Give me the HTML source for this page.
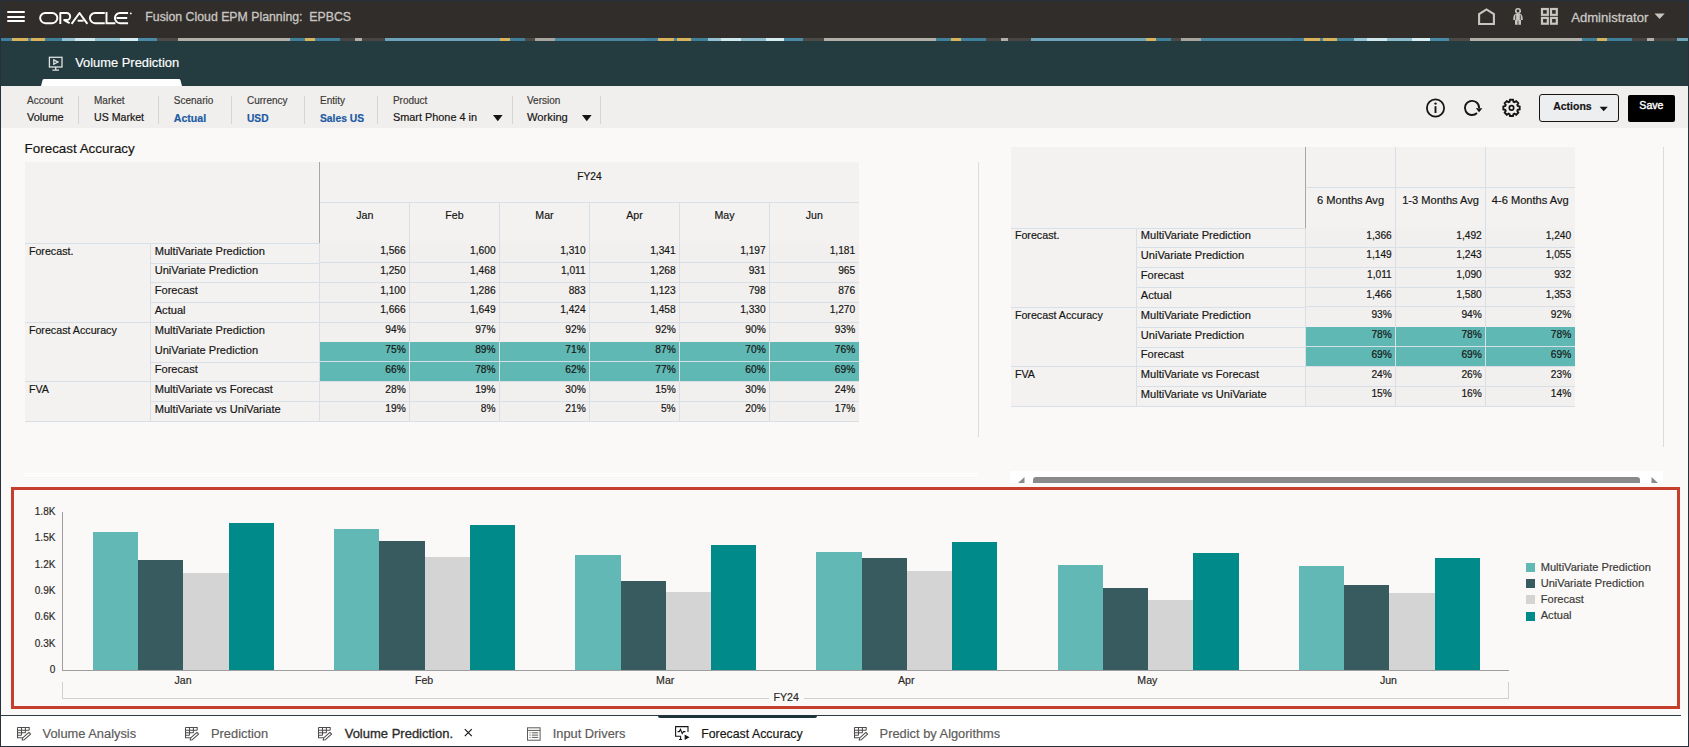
<!DOCTYPE html>
<html><head><meta charset="utf-8"><title>Forecast Accuracy</title>
<style>
html,body{margin:0;padding:0;width:1689px;height:747px;overflow:hidden;background:#faf9f7;}
body{position:relative;font-family:"Liberation Sans",sans-serif;}
.b{position:absolute;display:block;}
.t{position:absolute;white-space:nowrap;font-family:"Liberation Sans",sans-serif;-webkit-text-stroke-width:0.18px;}
</style></head><body>
<div class="b" style="left:0px;top:0px;width:1689px;height:38px;background:#312d2a;"></div>
<div class="b" style="left:0px;top:38px;width:1689px;height:3px;background:repeating-linear-gradient(90deg,#3f7f9d 0px,#3f7f9d 12px,#d8b35c 12px,#d8b35c 28px,#4a86a0 28px,#4a86a0 31px,#d8b35c 31px,#d8b35c 45px,#3f7f9a 45px,#3f7f9a 62px,#94c2d2 62px,#94c2d2 75px,#d0e9ef 75px,#d0e9ef 95px,#8cbccc 95px,#8cbccc 120px,#d6eef2 120px,#d6eef2 138px,#4a8aa6 138px,#4a8aa6 157px,#4b4a47 157px,#4b4a47 178px,#b2aea8 178px,#b2aea8 290px,#3f7f9a 290px,#3f7f9a 305px,#d8b35c 305px,#d8b35c 315px,#3f7f9a 315px,#3f7f9a 340px,#474644 340px,#474644 355px,#b2aea8 355px,#b2aea8 362px,#474644 362px,#474644 385px,#6ea4ba 385px,#6ea4ba 500px,#d8b35c 500px,#d8b35c 510px,#3f7f9a 510px,#3f7f9a 525px,#4b4a47 525px,#4b4a47 535px,#a8a49e 535px,#a8a49e 555px,#4a86a0 555px,#4a86a0 646px);"></div>
<div class="b" style="left:0px;top:41px;width:1689px;height:45px;background:#243b40;"></div>
<div class="b" style="left:0px;top:86px;width:1689px;height:42px;background:#f1efed;"></div>
<div class="b" style="left:0px;top:128px;width:1689px;height:587px;background:#faf9f7;"></div>
<div class="b" style="left:0px;top:715px;width:1689px;height:32px;background:#ffffff;"></div>
<div class="b" style="left:0px;top:715px;width:1681px;height:1px;background:#2a3c42;"></div>
<div class="b" style="left:7px;top:11px;width:18px;height:2px;background:#ffffff;border-radius:1px"></div>
<div class="b" style="left:7px;top:15.5px;width:18px;height:2px;background:#ffffff;border-radius:1px"></div>
<div class="b" style="left:7px;top:20px;width:18px;height:2px;background:#ffffff;border-radius:1px"></div>
<svg class="b" style="left:36px;top:8px;" width="100" height="20" viewBox="0 0 100 20"><g fill="none" stroke="#ffffff" stroke-width="1.95"><rect x="4.15" y="4.95" width="17.2" height="10.2" rx="5.1"/><path d="M24.3 16 V4.95 H30.6 A3.55 3.55 0 0 1 30.6 12.05 H28.2 L33.6 15.2" stroke-linejoin="round"/><path d="M35.6 15.9 L43.5 5 L51.4 15.9" stroke-linejoin="round"/><path d="M41.6 12.7 H47.6"/><path d="M68.8 4.95 H59 A5.1 5.1 0 0 0 59 15.15 H68.8"/><path d="M70.5 4.1 V15.15 H79.4"/><path d="M92.1 4.95 H84 A5.1 5.1 0 0 0 84 15.15 H92.1 M80.5 10.05 H91.2"/></g><circle cx="94.8" cy="5.4" r="0.9" fill="#ffffff"/></svg>
<div class="t" style="left:145.30px;top:10.34px;font-size:12.3px;line-height:15.99px;color:#c9c6c2;font-weight:400;-webkit-text-stroke:0.3px #c9c6c2;">Fusion Cloud EPM Planning:&nbsp; EPBCS</div>
<svg class="b" style="left:1474px;top:4px;" width="26" height="24" viewBox="0 0 26 24"><path d="M5.1 20 V10 L12.5 5.4 L19.9 10 V20 Z" fill="none" stroke="#c9c6c2" stroke-width="2.1" stroke-linejoin="miter"/></svg>
<svg class="b" style="left:1508px;top:4px;" width="20" height="24" viewBox="0 0 20 24"><circle cx="10" cy="7" r="2.2" fill="none" stroke="#c9c6c2" stroke-width="1.6"/><path d="M5.2 16 Q5.2 10.1 8 10.1 H12 Q14.8 10.1 14.8 16 H13 V20.8 H7 V16 Z" fill="#c9c6c2"/><path d="M7.7 11.2 V16 M12.3 11.2 V16 M10 16.6 V20.8" stroke="#312d2a" stroke-width="0.8"/></svg>
<svg class="b" style="left:1540px;top:7px;" width="20" height="20" viewBox="0 0 20 20"><g fill="none" stroke="#c9c6c2" stroke-width="2.2"><rect x="2" y="2" width="5.8" height="5.8"/><rect x="11" y="2" width="5.8" height="5.8"/><rect x="2" y="10.9" width="5.8" height="5.8"/><rect x="11" y="10.9" width="5.8" height="5.8"/></g></svg>
<div class="t" style="left:1571.20px;top:8.95px;font-size:13.1px;line-height:17.03px;color:#cbc8c4;font-weight:400;-webkit-text-stroke:0.3px #cbc8c4;">Administrator</div>
<svg class="b" style="left:1652px;top:12px;" width="14" height="9" viewBox="0 0 14 9"><path d="M2.5 1.6 H12.7 L7.6 7 Z" fill="#c9c6c2"/></svg>
<svg class="b" style="left:44px;top:52px;" width="24" height="22" viewBox="0 0 24 22"><g fill="none" stroke="#e0e0de" stroke-width="1.3"><rect x="5.4" y="5.3" width="12.6" height="9.7"/><path d="M9.8 7.9 L14 10.1 L9.8 12.3 Z"/><path d="M11.7 15 V18 M8.4 18.2 H15"/></g></svg>
<div class="t" style="left:75.20px;top:55.05px;font-size:12.9px;line-height:16.77px;color:#ffffff;font-weight:400;">Volume Prediction</div>
<svg class="b" style="left:40px;top:78px;" width="143" height="8" viewBox="0 0 143 8"><path d="M1 8 L2.6 2 Q3 1 4.2 1 H138.8 Q140 1 140.4 2 L142 8 Z" fill="#ffffff"/></svg>
<div class="t" style="left:27.00px;top:94.03px;font-size:10px;line-height:13.0px;color:#3c3a38;font-weight:400;">Account</div>
<div class="t" style="left:27.00px;top:110.04px;font-size:11px;line-height:14.3px;color:#161513;font-weight:400;">Volume</div>
<div class="t" style="left:94.00px;top:94.03px;font-size:10px;line-height:13.0px;color:#3c3a38;font-weight:400;">Market</div>
<div class="t" style="left:94.00px;top:110.94px;font-size:10.6px;line-height:13.78px;color:#161513;font-weight:400;">US Market</div>
<div class="t" style="left:173.80px;top:94.03px;font-size:10px;line-height:13.0px;color:#3c3a38;font-weight:400;">Scenario</div>
<div class="t" style="left:173.80px;top:111.84px;font-size:10.6px;line-height:13.78px;color:#1b5aa5;font-weight:700;">Actual</div>
<div class="t" style="left:247.00px;top:94.03px;font-size:10px;line-height:13.0px;color:#3c3a38;font-weight:400;">Currency</div>
<div class="t" style="left:247.00px;top:112.24px;font-size:10.2px;line-height:13.26px;color:#1b5aa5;font-weight:700;">USD</div>
<div class="t" style="left:320.00px;top:94.03px;font-size:10px;line-height:13.0px;color:#3c3a38;font-weight:400;">Entity</div>
<div class="t" style="left:320.00px;top:112.14px;font-size:10.3px;line-height:13.39px;color:#1b5aa5;font-weight:700;">Sales US</div>
<div class="t" style="left:392.90px;top:94.03px;font-size:10px;line-height:13.0px;color:#3c3a38;font-weight:400;">Product</div>
<div class="t" style="left:392.90px;top:110.14px;font-size:10.9px;line-height:14.17px;color:#161513;font-weight:400;">Smart Phone 4 in</div>
<svg class="b" style="left:491.8px;top:113px;" width="12" height="10" viewBox="0 0 12 10"><path d="M1 2 H10.6 L5.8 8.2 Z" fill="#161513"/></svg>
<div class="t" style="left:527.00px;top:94.03px;font-size:10px;line-height:13.0px;color:#3c3a38;font-weight:400;">Version</div>
<div class="t" style="left:527.00px;top:109.84px;font-size:11.2px;line-height:14.56px;color:#161513;font-weight:400;">Working</div>
<svg class="b" style="left:580.5px;top:113px;" width="12" height="10" viewBox="0 0 12 10"><path d="M1 2 H10.6 L5.8 8.2 Z" fill="#161513"/></svg>
<div class="b" style="left:78px;top:95.5px;width:1px;height:28.5px;background:#d7d5d2;"></div>
<div class="b" style="left:158px;top:95.5px;width:1px;height:28.5px;background:#d7d5d2;"></div>
<div class="b" style="left:231px;top:95.5px;width:1px;height:28.5px;background:#d7d5d2;"></div>
<div class="b" style="left:304px;top:95.5px;width:1px;height:28.5px;background:#d7d5d2;"></div>
<div class="b" style="left:377px;top:95.5px;width:1px;height:28.5px;background:#d7d5d2;"></div>
<div class="b" style="left:512px;top:95.5px;width:1px;height:28.5px;background:#d7d5d2;"></div>
<div class="b" style="left:600px;top:95.5px;width:1px;height:28.5px;background:#d7d5d2;"></div>
<svg class="b" style="left:1424px;top:97px;" width="24" height="22" viewBox="0 0 24 22"><circle cx="11.5" cy="11" r="8.6" fill="none" stroke="#161513" stroke-width="1.8"/><circle cx="11.5" cy="6.6" r="1.2" fill="#161513"/><path d="M11.5 9.2 V16" stroke="#161513" stroke-width="1.9"/></svg>
<svg class="b" style="left:1461px;top:97px;" width="24" height="22" viewBox="0 0 24 22"><path d="M18.1 11 A7.1 7.1 0 1 0 16 16" fill="none" stroke="#161513" stroke-width="1.9"/><path d="M14.8 11.2 L21.4 11.2 L18.1 15.3 Z" fill="#161513"/></svg>
<svg class="b" style="left:1500px;top:97px;" width="24" height="22" viewBox="0 0 24 22"><polygon points="19.67,9.41 19.67,12.39 17.69,12.88 17.28,13.88 18.32,15.62 16.22,17.72 14.48,16.68 13.48,17.09 12.99,19.07 10.01,19.07 9.52,17.09 8.52,16.68 6.78,17.72 4.68,15.62 5.72,13.88 5.31,12.88 3.33,12.39 3.33,9.41 5.31,8.92 5.72,7.92 4.68,6.18 6.78,4.08 8.52,5.12 9.52,4.71 10.01,2.73 12.99,2.73 13.48,4.71 14.48,5.12 16.22,4.08 18.32,6.18 17.28,7.92 17.69,8.92" fill="none" stroke="#161513" stroke-width="1.9" stroke-linejoin="miter"/><circle cx="11.5" cy="10.9" r="2.2" fill="none" stroke="#161513" stroke-width="1.7"/></svg>
<div class="b" style="left:1539px;top:94.2px;width:80px;height:27.8px;background:#eceeef;border:1.3px solid #161513;border-radius:3px;box-sizing:border-box"></div>
<div class="t" style="left:1553.20px;top:100.44px;font-size:10.5px;line-height:13.65px;color:#161513;font-weight:700;">Actions</div>
<svg class="b" style="left:1598px;top:105px;" width="12" height="8" viewBox="0 0 12 8"><path d="M1.6 1.8 H9.8 L5.7 6.3 Z" fill="#161513"/></svg>
<div class="b" style="left:1627.8px;top:94.8px;width:47.2px;height:27.2px;background:#000000;border-radius:2px"></div>
<div class="t" style="left:1621.40px;width:60px;text-align:center;top:99.04px;font-size:10.6px;line-height:13.78px;color:#ffffff;font-weight:400;-webkit-text-stroke:0.4px #ffffff;">Save</div>
<div class="b" style="left:25px;top:162px;width:834px;height:81.30000000000001px;background:#f3f2f1;"></div>
<div class="b" style="left:25px;top:243.3px;width:294.6px;height:178.2px;background:#f3f2f1;"></div>
<div class="b" style="left:319.6px;top:243.3px;width:539.4px;height:178.2px;background:#f1f0ee;"></div>
<div class="b" style="left:320px;top:202px;width:539px;height:1px;background:#d8dfe6;"></div>
<div class="b" style="left:409.0px;top:202.5px;width:1px;height:41px;background:#d8dfe6;"></div>
<div class="b" style="left:498.9px;top:202.5px;width:1px;height:41px;background:#d8dfe6;"></div>
<div class="b" style="left:589.0px;top:202.5px;width:1px;height:41px;background:#d8dfe6;"></div>
<div class="b" style="left:679.0px;top:202.5px;width:1px;height:41px;background:#d8dfe6;"></div>
<div class="b" style="left:769.0px;top:202.5px;width:1px;height:41px;background:#d8dfe6;"></div>
<div class="t" style="left:549.50px;width:80px;text-align:center;top:169.74px;font-size:10.2px;line-height:13.26px;color:#161513;font-weight:400;">FY24</div>
<div class="t" style="left:324.75px;width:80px;text-align:center;top:209.04px;font-size:10.6px;line-height:13.78px;color:#161513;font-weight:400;">Jan</div>
<div class="t" style="left:414.45px;width:80px;text-align:center;top:209.04px;font-size:10.6px;line-height:13.78px;color:#161513;font-weight:400;">Feb</div>
<div class="t" style="left:504.45px;width:80px;text-align:center;top:209.04px;font-size:10.6px;line-height:13.78px;color:#161513;font-weight:400;">Mar</div>
<div class="t" style="left:594.50px;width:80px;text-align:center;top:209.04px;font-size:10.6px;line-height:13.78px;color:#161513;font-weight:400;">Apr</div>
<div class="t" style="left:684.50px;width:80px;text-align:center;top:209.04px;font-size:10.6px;line-height:13.78px;color:#161513;font-weight:400;">May</div>
<div class="t" style="left:774.25px;width:80px;text-align:center;top:209.04px;font-size:10.6px;line-height:13.78px;color:#161513;font-weight:400;">Jun</div>
<div class="b" style="left:319.1px;top:162px;width:1px;height:81.30000000000001px;background:#a9a7a4;"></div>
<div class="b" style="left:320px;top:342px;width:89px;height:19px;background:#5fb8b3;"></div>
<div class="b" style="left:410px;top:342px;width:89px;height:19px;background:#5fb8b3;"></div>
<div class="b" style="left:500px;top:342px;width:89px;height:19px;background:#5fb8b3;"></div>
<div class="b" style="left:590px;top:342px;width:89px;height:19px;background:#5fb8b3;"></div>
<div class="b" style="left:680px;top:342px;width:89px;height:19px;background:#5fb8b3;"></div>
<div class="b" style="left:770px;top:342px;width:89px;height:19px;background:#5fb8b3;"></div>
<div class="b" style="left:320px;top:362px;width:89px;height:19px;background:#5fb8b3;"></div>
<div class="b" style="left:410px;top:362px;width:89px;height:19px;background:#5fb8b3;"></div>
<div class="b" style="left:500px;top:362px;width:89px;height:19px;background:#5fb8b3;"></div>
<div class="b" style="left:590px;top:362px;width:89px;height:19px;background:#5fb8b3;"></div>
<div class="b" style="left:680px;top:362px;width:89px;height:19px;background:#5fb8b3;"></div>
<div class="b" style="left:770px;top:362px;width:89px;height:19px;background:#5fb8b3;"></div>
<div class="b" style="left:25px;top:242.8px;width:294.6px;height:1px;background:#d8dfe6;"></div>
<div class="b" style="left:150.3px;top:262.6px;width:169.3px;height:1px;background:#d8dfe6;"></div>
<div class="b" style="left:319.6px;top:262.1px;width:539.4px;height:1px;background:#d8dfe6;"></div>
<div class="b" style="left:150.3px;top:282.40000000000003px;width:169.3px;height:1px;background:#d8dfe6;"></div>
<div class="b" style="left:319.6px;top:281.90000000000003px;width:539.4px;height:1px;background:#d8dfe6;"></div>
<div class="b" style="left:150.3px;top:302.20000000000005px;width:169.3px;height:1px;background:#d8dfe6;"></div>
<div class="b" style="left:319.6px;top:301.70000000000005px;width:539.4px;height:1px;background:#d8dfe6;"></div>
<div class="b" style="left:25px;top:322.0px;width:294.6px;height:1px;background:#d8dfe6;"></div>
<div class="b" style="left:319.6px;top:321.5px;width:539.4px;height:1px;background:#d8dfe6;"></div>
<div class="b" style="left:150.3px;top:361.6px;width:169.3px;height:1px;background:#d8dfe6;"></div>
<div class="b" style="left:319.6px;top:361.1px;width:539.4px;height:1px;background:#d8dfe6;"></div>
<div class="b" style="left:25px;top:381.4px;width:294.6px;height:1px;background:#d8dfe6;"></div>
<div class="b" style="left:319.6px;top:380.9px;width:539.4px;height:1px;background:#d8dfe6;"></div>
<div class="b" style="left:150.3px;top:401.20000000000005px;width:169.3px;height:1px;background:#d8dfe6;"></div>
<div class="b" style="left:319.6px;top:400.70000000000005px;width:539.4px;height:1px;background:#d8dfe6;"></div>
<div class="b" style="left:25px;top:421.0px;width:294.6px;height:1px;background:#d8dfe6;"></div>
<div class="b" style="left:319.6px;top:420.5px;width:539.4px;height:1px;background:#d8dfe6;"></div>
<div class="b" style="left:149.8px;top:243.3px;width:1px;height:178.2px;background:#d8dfe6;"></div>
<div class="b" style="left:319.1px;top:243.3px;width:1px;height:178.2px;background:#d8dfe6;"></div>
<div class="b" style="left:409.0px;top:243.3px;width:1px;height:178.2px;background:#d8dfe6;"></div>
<div class="b" style="left:498.9px;top:243.3px;width:1px;height:178.2px;background:#d8dfe6;"></div>
<div class="b" style="left:589.0px;top:243.3px;width:1px;height:178.2px;background:#d8dfe6;"></div>
<div class="b" style="left:679.0px;top:243.3px;width:1px;height:178.2px;background:#d8dfe6;"></div>
<div class="b" style="left:769.0px;top:243.3px;width:1px;height:178.2px;background:#d8dfe6;"></div>
<div class="t" style="left:28.90px;top:244.74px;font-size:10.7px;line-height:13.91px;color:#161513;font-weight:400;">Forecast.</div>
<div class="t" style="left:154.70px;top:243.64px;font-size:11.1px;line-height:14.43px;color:#161513;font-weight:400;">MultiVariate Prediction</div>
<div class="t" style="left:325.70px;width:80px;text-align:right;top:243.94px;font-size:10.2px;line-height:13.26px;color:#161513;font-weight:400;">1,566</div>
<div class="t" style="left:415.60px;width:80px;text-align:right;top:243.94px;font-size:10.2px;line-height:13.26px;color:#161513;font-weight:400;">1,600</div>
<div class="t" style="left:505.70px;width:80px;text-align:right;top:243.94px;font-size:10.2px;line-height:13.26px;color:#161513;font-weight:400;">1,310</div>
<div class="t" style="left:595.70px;width:80px;text-align:right;top:243.94px;font-size:10.2px;line-height:13.26px;color:#161513;font-weight:400;">1,341</div>
<div class="t" style="left:685.70px;width:80px;text-align:right;top:243.94px;font-size:10.2px;line-height:13.26px;color:#161513;font-weight:400;">1,197</div>
<div class="t" style="left:775.20px;width:80px;text-align:right;top:243.94px;font-size:10.2px;line-height:13.26px;color:#161513;font-weight:400;">1,181</div>
<div class="t" style="left:154.70px;top:263.44px;font-size:11.1px;line-height:14.43px;color:#161513;font-weight:400;">UniVariate Prediction</div>
<div class="t" style="left:325.70px;width:80px;text-align:right;top:263.74px;font-size:10.2px;line-height:13.26px;color:#161513;font-weight:400;">1,250</div>
<div class="t" style="left:415.60px;width:80px;text-align:right;top:263.74px;font-size:10.2px;line-height:13.26px;color:#161513;font-weight:400;">1,468</div>
<div class="t" style="left:505.70px;width:80px;text-align:right;top:263.74px;font-size:10.2px;line-height:13.26px;color:#161513;font-weight:400;">1,011</div>
<div class="t" style="left:595.70px;width:80px;text-align:right;top:263.74px;font-size:10.2px;line-height:13.26px;color:#161513;font-weight:400;">1,268</div>
<div class="t" style="left:685.70px;width:80px;text-align:right;top:263.74px;font-size:10.2px;line-height:13.26px;color:#161513;font-weight:400;">931</div>
<div class="t" style="left:775.20px;width:80px;text-align:right;top:263.74px;font-size:10.2px;line-height:13.26px;color:#161513;font-weight:400;">965</div>
<div class="t" style="left:154.70px;top:283.24px;font-size:11.1px;line-height:14.43px;color:#161513;font-weight:400;">Forecast</div>
<div class="t" style="left:325.70px;width:80px;text-align:right;top:283.54px;font-size:10.2px;line-height:13.26px;color:#161513;font-weight:400;">1,100</div>
<div class="t" style="left:415.60px;width:80px;text-align:right;top:283.54px;font-size:10.2px;line-height:13.26px;color:#161513;font-weight:400;">1,286</div>
<div class="t" style="left:505.70px;width:80px;text-align:right;top:283.54px;font-size:10.2px;line-height:13.26px;color:#161513;font-weight:400;">883</div>
<div class="t" style="left:595.70px;width:80px;text-align:right;top:283.54px;font-size:10.2px;line-height:13.26px;color:#161513;font-weight:400;">1,123</div>
<div class="t" style="left:685.70px;width:80px;text-align:right;top:283.54px;font-size:10.2px;line-height:13.26px;color:#161513;font-weight:400;">798</div>
<div class="t" style="left:775.20px;width:80px;text-align:right;top:283.54px;font-size:10.2px;line-height:13.26px;color:#161513;font-weight:400;">876</div>
<div class="t" style="left:154.70px;top:303.04px;font-size:11.1px;line-height:14.43px;color:#161513;font-weight:400;">Actual</div>
<div class="t" style="left:325.70px;width:80px;text-align:right;top:303.34px;font-size:10.2px;line-height:13.26px;color:#161513;font-weight:400;">1,666</div>
<div class="t" style="left:415.60px;width:80px;text-align:right;top:303.34px;font-size:10.2px;line-height:13.26px;color:#161513;font-weight:400;">1,649</div>
<div class="t" style="left:505.70px;width:80px;text-align:right;top:303.34px;font-size:10.2px;line-height:13.26px;color:#161513;font-weight:400;">1,424</div>
<div class="t" style="left:595.70px;width:80px;text-align:right;top:303.34px;font-size:10.2px;line-height:13.26px;color:#161513;font-weight:400;">1,458</div>
<div class="t" style="left:685.70px;width:80px;text-align:right;top:303.34px;font-size:10.2px;line-height:13.26px;color:#161513;font-weight:400;">1,330</div>
<div class="t" style="left:775.20px;width:80px;text-align:right;top:303.34px;font-size:10.2px;line-height:13.26px;color:#161513;font-weight:400;">1,270</div>
<div class="t" style="left:28.90px;top:323.94px;font-size:10.7px;line-height:13.91px;color:#161513;font-weight:400;">Forecast Accuracy</div>
<div class="t" style="left:154.70px;top:322.84px;font-size:11.1px;line-height:14.43px;color:#161513;font-weight:400;">MultiVariate Prediction</div>
<div class="t" style="left:325.70px;width:80px;text-align:right;top:323.14px;font-size:10.2px;line-height:13.26px;color:#161513;font-weight:400;">94%</div>
<div class="t" style="left:415.60px;width:80px;text-align:right;top:323.14px;font-size:10.2px;line-height:13.26px;color:#161513;font-weight:400;">97%</div>
<div class="t" style="left:505.70px;width:80px;text-align:right;top:323.14px;font-size:10.2px;line-height:13.26px;color:#161513;font-weight:400;">92%</div>
<div class="t" style="left:595.70px;width:80px;text-align:right;top:323.14px;font-size:10.2px;line-height:13.26px;color:#161513;font-weight:400;">92%</div>
<div class="t" style="left:685.70px;width:80px;text-align:right;top:323.14px;font-size:10.2px;line-height:13.26px;color:#161513;font-weight:400;">90%</div>
<div class="t" style="left:775.20px;width:80px;text-align:right;top:323.14px;font-size:10.2px;line-height:13.26px;color:#161513;font-weight:400;">93%</div>
<div class="t" style="left:154.70px;top:342.64px;font-size:11.1px;line-height:14.43px;color:#161513;font-weight:400;">UniVariate Prediction</div>
<div class="t" style="left:325.70px;width:80px;text-align:right;top:342.94px;font-size:10.2px;line-height:13.26px;color:#161513;font-weight:400;">75%</div>
<div class="t" style="left:415.60px;width:80px;text-align:right;top:342.94px;font-size:10.2px;line-height:13.26px;color:#161513;font-weight:400;">89%</div>
<div class="t" style="left:505.70px;width:80px;text-align:right;top:342.94px;font-size:10.2px;line-height:13.26px;color:#161513;font-weight:400;">71%</div>
<div class="t" style="left:595.70px;width:80px;text-align:right;top:342.94px;font-size:10.2px;line-height:13.26px;color:#161513;font-weight:400;">87%</div>
<div class="t" style="left:685.70px;width:80px;text-align:right;top:342.94px;font-size:10.2px;line-height:13.26px;color:#161513;font-weight:400;">70%</div>
<div class="t" style="left:775.20px;width:80px;text-align:right;top:342.94px;font-size:10.2px;line-height:13.26px;color:#161513;font-weight:400;">76%</div>
<div class="t" style="left:154.70px;top:362.44px;font-size:11.1px;line-height:14.43px;color:#161513;font-weight:400;">Forecast</div>
<div class="t" style="left:325.70px;width:80px;text-align:right;top:362.74px;font-size:10.2px;line-height:13.26px;color:#161513;font-weight:400;">66%</div>
<div class="t" style="left:415.60px;width:80px;text-align:right;top:362.74px;font-size:10.2px;line-height:13.26px;color:#161513;font-weight:400;">78%</div>
<div class="t" style="left:505.70px;width:80px;text-align:right;top:362.74px;font-size:10.2px;line-height:13.26px;color:#161513;font-weight:400;">62%</div>
<div class="t" style="left:595.70px;width:80px;text-align:right;top:362.74px;font-size:10.2px;line-height:13.26px;color:#161513;font-weight:400;">77%</div>
<div class="t" style="left:685.70px;width:80px;text-align:right;top:362.74px;font-size:10.2px;line-height:13.26px;color:#161513;font-weight:400;">60%</div>
<div class="t" style="left:775.20px;width:80px;text-align:right;top:362.74px;font-size:10.2px;line-height:13.26px;color:#161513;font-weight:400;">69%</div>
<div class="t" style="left:28.90px;top:383.34px;font-size:10.7px;line-height:13.91px;color:#161513;font-weight:400;">FVA</div>
<div class="t" style="left:154.70px;top:382.24px;font-size:11.1px;line-height:14.43px;color:#161513;font-weight:400;">MultiVariate vs Forecast</div>
<div class="t" style="left:325.70px;width:80px;text-align:right;top:382.54px;font-size:10.2px;line-height:13.26px;color:#161513;font-weight:400;">28%</div>
<div class="t" style="left:415.60px;width:80px;text-align:right;top:382.54px;font-size:10.2px;line-height:13.26px;color:#161513;font-weight:400;">19%</div>
<div class="t" style="left:505.70px;width:80px;text-align:right;top:382.54px;font-size:10.2px;line-height:13.26px;color:#161513;font-weight:400;">30%</div>
<div class="t" style="left:595.70px;width:80px;text-align:right;top:382.54px;font-size:10.2px;line-height:13.26px;color:#161513;font-weight:400;">15%</div>
<div class="t" style="left:685.70px;width:80px;text-align:right;top:382.54px;font-size:10.2px;line-height:13.26px;color:#161513;font-weight:400;">30%</div>
<div class="t" style="left:775.20px;width:80px;text-align:right;top:382.54px;font-size:10.2px;line-height:13.26px;color:#161513;font-weight:400;">24%</div>
<div class="t" style="left:154.70px;top:402.04px;font-size:11.1px;line-height:14.43px;color:#161513;font-weight:400;">MultiVariate vs UniVariate</div>
<div class="t" style="left:325.70px;width:80px;text-align:right;top:402.34px;font-size:10.2px;line-height:13.26px;color:#161513;font-weight:400;">19%</div>
<div class="t" style="left:415.60px;width:80px;text-align:right;top:402.34px;font-size:10.2px;line-height:13.26px;color:#161513;font-weight:400;">8%</div>
<div class="t" style="left:505.70px;width:80px;text-align:right;top:402.34px;font-size:10.2px;line-height:13.26px;color:#161513;font-weight:400;">21%</div>
<div class="t" style="left:595.70px;width:80px;text-align:right;top:402.34px;font-size:10.2px;line-height:13.26px;color:#161513;font-weight:400;">5%</div>
<div class="t" style="left:685.70px;width:80px;text-align:right;top:402.34px;font-size:10.2px;line-height:13.26px;color:#161513;font-weight:400;">20%</div>
<div class="t" style="left:775.20px;width:80px;text-align:right;top:402.34px;font-size:10.2px;line-height:13.26px;color:#161513;font-weight:400;">17%</div>
<div class="b" style="left:1011px;top:147px;width:564px;height:81px;background:#f3f2f1;"></div>
<div class="b" style="left:1011px;top:228px;width:294.5px;height:178.64999999999998px;background:#f3f2f1;"></div>
<div class="b" style="left:1305.5px;top:228px;width:269.5px;height:178.64999999999998px;background:#f1f0ee;"></div>
<div class="b" style="left:1305.5px;top:187px;width:269.5px;height:1px;background:#d8dfe6;"></div>
<div class="b" style="left:1395.1px;top:147px;width:1px;height:81px;background:#d8dfe6;"></div>
<div class="b" style="left:1485.1px;top:147px;width:1px;height:81px;background:#d8dfe6;"></div>
<div class="t" style="left:1305.55px;width:90px;text-align:center;top:192.74px;font-size:11.1px;line-height:14.43px;color:#161513;font-weight:400;">6 Months Avg</div>
<div class="t" style="left:1395.60px;width:90px;text-align:center;top:192.74px;font-size:11.1px;line-height:14.43px;color:#161513;font-weight:400;">1-3 Months Avg</div>
<div class="t" style="left:1485.30px;width:90px;text-align:center;top:192.74px;font-size:11.1px;line-height:14.43px;color:#161513;font-weight:400;">4-6 Months Avg</div>
<div class="b" style="left:1305.0px;top:147px;width:1px;height:81px;background:#a9a7a4;"></div>
<div class="b" style="left:1306px;top:327px;width:89px;height:19px;background:#5fb8b3;"></div>
<div class="b" style="left:1396px;top:327px;width:89px;height:19px;background:#5fb8b3;"></div>
<div class="b" style="left:1486px;top:327px;width:89px;height:19px;background:#5fb8b3;"></div>
<div class="b" style="left:1306px;top:347px;width:89px;height:19px;background:#5fb8b3;"></div>
<div class="b" style="left:1396px;top:347px;width:89px;height:19px;background:#5fb8b3;"></div>
<div class="b" style="left:1486px;top:347px;width:89px;height:19px;background:#5fb8b3;"></div>
<div class="b" style="left:1011px;top:227.5px;width:294.5px;height:1px;background:#d8dfe6;"></div>
<div class="b" style="left:1136.4px;top:247.35px;width:169.0999999999999px;height:1px;background:#d8dfe6;"></div>
<div class="b" style="left:1305.5px;top:246.85px;width:269.5px;height:1px;background:#d8dfe6;"></div>
<div class="b" style="left:1136.4px;top:267.2px;width:169.0999999999999px;height:1px;background:#d8dfe6;"></div>
<div class="b" style="left:1305.5px;top:266.7px;width:269.5px;height:1px;background:#d8dfe6;"></div>
<div class="b" style="left:1136.4px;top:287.05px;width:169.0999999999999px;height:1px;background:#d8dfe6;"></div>
<div class="b" style="left:1305.5px;top:286.55px;width:269.5px;height:1px;background:#d8dfe6;"></div>
<div class="b" style="left:1011px;top:306.9px;width:294.5px;height:1px;background:#d8dfe6;"></div>
<div class="b" style="left:1305.5px;top:306.4px;width:269.5px;height:1px;background:#d8dfe6;"></div>
<div class="b" style="left:1136.4px;top:326.75px;width:169.0999999999999px;height:1px;background:#d8dfe6;"></div>
<div class="b" style="left:1136.4px;top:346.6px;width:169.0999999999999px;height:1px;background:#d8dfe6;"></div>
<div class="b" style="left:1305.5px;top:346.1px;width:269.5px;height:1px;background:#d8dfe6;"></div>
<div class="b" style="left:1011px;top:366.45000000000005px;width:294.5px;height:1px;background:#d8dfe6;"></div>
<div class="b" style="left:1305.5px;top:365.95000000000005px;width:269.5px;height:1px;background:#d8dfe6;"></div>
<div class="b" style="left:1136.4px;top:386.3px;width:169.0999999999999px;height:1px;background:#d8dfe6;"></div>
<div class="b" style="left:1305.5px;top:385.8px;width:269.5px;height:1px;background:#d8dfe6;"></div>
<div class="b" style="left:1011px;top:406.15px;width:294.5px;height:1px;background:#d8dfe6;"></div>
<div class="b" style="left:1305.5px;top:405.65px;width:269.5px;height:1px;background:#d8dfe6;"></div>
<div class="b" style="left:1135.9px;top:228px;width:1px;height:178.64999999999998px;background:#d8dfe6;"></div>
<div class="b" style="left:1305.0px;top:228px;width:1px;height:178.64999999999998px;background:#d8dfe6;"></div>
<div class="b" style="left:1395.1px;top:228px;width:1px;height:178.64999999999998px;background:#d8dfe6;"></div>
<div class="b" style="left:1485.1px;top:228px;width:1px;height:178.64999999999998px;background:#d8dfe6;"></div>
<div class="t" style="left:1014.90px;top:229.44px;font-size:10.7px;line-height:13.91px;color:#161513;font-weight:400;">Forecast.</div>
<div class="t" style="left:1140.80px;top:228.34px;font-size:11.1px;line-height:14.43px;color:#161513;font-weight:400;">MultiVariate Prediction</div>
<div class="t" style="left:1311.80px;width:80px;text-align:right;top:228.64px;font-size:10.2px;line-height:13.26px;color:#161513;font-weight:400;">1,366</div>
<div class="t" style="left:1401.80px;width:80px;text-align:right;top:228.64px;font-size:10.2px;line-height:13.26px;color:#161513;font-weight:400;">1,492</div>
<div class="t" style="left:1491.20px;width:80px;text-align:right;top:228.64px;font-size:10.2px;line-height:13.26px;color:#161513;font-weight:400;">1,240</div>
<div class="t" style="left:1140.80px;top:248.19px;font-size:11.1px;line-height:14.43px;color:#161513;font-weight:400;">UniVariate Prediction</div>
<div class="t" style="left:1311.80px;width:80px;text-align:right;top:248.49px;font-size:10.2px;line-height:13.26px;color:#161513;font-weight:400;">1,149</div>
<div class="t" style="left:1401.80px;width:80px;text-align:right;top:248.49px;font-size:10.2px;line-height:13.26px;color:#161513;font-weight:400;">1,243</div>
<div class="t" style="left:1491.20px;width:80px;text-align:right;top:248.49px;font-size:10.2px;line-height:13.26px;color:#161513;font-weight:400;">1,055</div>
<div class="t" style="left:1140.80px;top:268.04px;font-size:11.1px;line-height:14.43px;color:#161513;font-weight:400;">Forecast</div>
<div class="t" style="left:1311.80px;width:80px;text-align:right;top:268.34px;font-size:10.2px;line-height:13.26px;color:#161513;font-weight:400;">1,011</div>
<div class="t" style="left:1401.80px;width:80px;text-align:right;top:268.34px;font-size:10.2px;line-height:13.26px;color:#161513;font-weight:400;">1,090</div>
<div class="t" style="left:1491.20px;width:80px;text-align:right;top:268.34px;font-size:10.2px;line-height:13.26px;color:#161513;font-weight:400;">932</div>
<div class="t" style="left:1140.80px;top:287.89px;font-size:11.1px;line-height:14.43px;color:#161513;font-weight:400;">Actual</div>
<div class="t" style="left:1311.80px;width:80px;text-align:right;top:288.19px;font-size:10.2px;line-height:13.26px;color:#161513;font-weight:400;">1,466</div>
<div class="t" style="left:1401.80px;width:80px;text-align:right;top:288.19px;font-size:10.2px;line-height:13.26px;color:#161513;font-weight:400;">1,580</div>
<div class="t" style="left:1491.20px;width:80px;text-align:right;top:288.19px;font-size:10.2px;line-height:13.26px;color:#161513;font-weight:400;">1,353</div>
<div class="t" style="left:1014.90px;top:308.84px;font-size:10.7px;line-height:13.91px;color:#161513;font-weight:400;">Forecast Accuracy</div>
<div class="t" style="left:1140.80px;top:307.74px;font-size:11.1px;line-height:14.43px;color:#161513;font-weight:400;">MultiVariate Prediction</div>
<div class="t" style="left:1311.80px;width:80px;text-align:right;top:308.04px;font-size:10.2px;line-height:13.26px;color:#161513;font-weight:400;">93%</div>
<div class="t" style="left:1401.80px;width:80px;text-align:right;top:308.04px;font-size:10.2px;line-height:13.26px;color:#161513;font-weight:400;">94%</div>
<div class="t" style="left:1491.20px;width:80px;text-align:right;top:308.04px;font-size:10.2px;line-height:13.26px;color:#161513;font-weight:400;">92%</div>
<div class="t" style="left:1140.80px;top:327.59px;font-size:11.1px;line-height:14.43px;color:#161513;font-weight:400;">UniVariate Prediction</div>
<div class="t" style="left:1311.80px;width:80px;text-align:right;top:327.89px;font-size:10.2px;line-height:13.26px;color:#161513;font-weight:400;">78%</div>
<div class="t" style="left:1401.80px;width:80px;text-align:right;top:327.89px;font-size:10.2px;line-height:13.26px;color:#161513;font-weight:400;">78%</div>
<div class="t" style="left:1491.20px;width:80px;text-align:right;top:327.89px;font-size:10.2px;line-height:13.26px;color:#161513;font-weight:400;">78%</div>
<div class="t" style="left:1140.80px;top:347.44px;font-size:11.1px;line-height:14.43px;color:#161513;font-weight:400;">Forecast</div>
<div class="t" style="left:1311.80px;width:80px;text-align:right;top:347.74px;font-size:10.2px;line-height:13.26px;color:#161513;font-weight:400;">69%</div>
<div class="t" style="left:1401.80px;width:80px;text-align:right;top:347.74px;font-size:10.2px;line-height:13.26px;color:#161513;font-weight:400;">69%</div>
<div class="t" style="left:1491.20px;width:80px;text-align:right;top:347.74px;font-size:10.2px;line-height:13.26px;color:#161513;font-weight:400;">69%</div>
<div class="t" style="left:1014.90px;top:368.39px;font-size:10.7px;line-height:13.91px;color:#161513;font-weight:400;">FVA</div>
<div class="t" style="left:1140.80px;top:367.29px;font-size:11.1px;line-height:14.43px;color:#161513;font-weight:400;">MultiVariate vs Forecast</div>
<div class="t" style="left:1311.80px;width:80px;text-align:right;top:367.59px;font-size:10.2px;line-height:13.26px;color:#161513;font-weight:400;">24%</div>
<div class="t" style="left:1401.80px;width:80px;text-align:right;top:367.59px;font-size:10.2px;line-height:13.26px;color:#161513;font-weight:400;">26%</div>
<div class="t" style="left:1491.20px;width:80px;text-align:right;top:367.59px;font-size:10.2px;line-height:13.26px;color:#161513;font-weight:400;">23%</div>
<div class="t" style="left:1140.80px;top:387.14px;font-size:11.1px;line-height:14.43px;color:#161513;font-weight:400;">MultiVariate vs UniVariate</div>
<div class="t" style="left:1311.80px;width:80px;text-align:right;top:387.44px;font-size:10.2px;line-height:13.26px;color:#161513;font-weight:400;">15%</div>
<div class="t" style="left:1401.80px;width:80px;text-align:right;top:387.44px;font-size:10.2px;line-height:13.26px;color:#161513;font-weight:400;">16%</div>
<div class="t" style="left:1491.20px;width:80px;text-align:right;top:387.44px;font-size:10.2px;line-height:13.26px;color:#161513;font-weight:400;">14%</div>
<div class="t" style="left:24.60px;top:139.55px;font-size:13.4px;line-height:17.42px;color:#161513;font-weight:400;">Forecast Accuracy</div>
<div class="b" style="left:978px;top:162px;width:1px;height:275px;background:#dedcda;"></div>
<div class="b" style="left:1663px;top:147px;width:1px;height:300px;background:#dedcda;"></div>
<div class="b" style="left:24px;top:473px;width:954px;height:1px;background:#ffffff;"></div>
<div class="b" style="left:24px;top:475px;width:954px;height:1px;background:#ffffff;"></div>
<div class="b" style="left:1010px;top:471px;width:653px;height:12px;background:#ffffff;"></div>
<div class="b" style="left:1033px;top:477px;width:607px;height:6px;background:#8a8a8a;border-radius:3px 3px 0 0"></div>
<svg class="b" style="left:1016px;top:476px;" width="12" height="8" viewBox="0 0 12 8"><path d="M2 7 L8.5 1 V7 Z" fill="#8a8a8a"/></svg>
<svg class="b" style="left:1648px;top:476px;" width="12" height="8" viewBox="0 0 12 8"><path d="M10 7 L3.5 1 V7 Z" fill="#8a8a8a"/></svg>
<div class="b" style="left:93px;top:532px;width:45px;height:138px;background:#62b8b4;"></div>
<div class="b" style="left:138px;top:560px;width:45px;height:110px;background:#375b5f;"></div>
<div class="b" style="left:183px;top:573px;width:46px;height:97px;background:#d4d4d4;"></div>
<div class="b" style="left:229px;top:523px;width:45px;height:147px;background:#008b8a;"></div>
<div class="t" style="left:143.04px;width:80px;text-align:center;top:673.74px;font-size:10.6px;line-height:13.78px;color:#2b2a28;font-weight:400;">Jan</div>
<div class="b" style="left:334px;top:529px;width:45px;height:141px;background:#62b8b4;"></div>
<div class="b" style="left:379px;top:541px;width:46px;height:129px;background:#375b5f;"></div>
<div class="b" style="left:425px;top:557px;width:45px;height:113px;background:#d4d4d4;"></div>
<div class="b" style="left:470px;top:525px;width:45px;height:145px;background:#008b8a;"></div>
<div class="t" style="left:384.13px;width:80px;text-align:center;top:673.74px;font-size:10.6px;line-height:13.78px;color:#2b2a28;font-weight:400;">Feb</div>
<div class="b" style="left:575px;top:555px;width:46px;height:115px;background:#62b8b4;"></div>
<div class="b" style="left:621px;top:581px;width:45px;height:89px;background:#375b5f;"></div>
<div class="b" style="left:666px;top:592px;width:45px;height:78px;background:#d4d4d4;"></div>
<div class="b" style="left:711px;top:545px;width:45px;height:125px;background:#008b8a;"></div>
<div class="t" style="left:625.21px;width:80px;text-align:center;top:673.74px;font-size:10.6px;line-height:13.78px;color:#2b2a28;font-weight:400;">Mar</div>
<div class="b" style="left:816px;top:552px;width:46px;height:118px;background:#62b8b4;"></div>
<div class="b" style="left:862px;top:558px;width:45px;height:112px;background:#375b5f;"></div>
<div class="b" style="left:907px;top:571px;width:45px;height:99px;background:#d4d4d4;"></div>
<div class="b" style="left:952px;top:542px;width:45px;height:128px;background:#008b8a;"></div>
<div class="t" style="left:866.29px;width:80px;text-align:center;top:673.74px;font-size:10.6px;line-height:13.78px;color:#2b2a28;font-weight:400;">Apr</div>
<div class="b" style="left:1058px;top:565px;width:45px;height:105px;background:#62b8b4;"></div>
<div class="b" style="left:1103px;top:588px;width:45px;height:82px;background:#375b5f;"></div>
<div class="b" style="left:1148px;top:600px;width:45px;height:70px;background:#d4d4d4;"></div>
<div class="b" style="left:1193px;top:553px;width:46px;height:117px;background:#008b8a;"></div>
<div class="t" style="left:1107.38px;width:80px;text-align:center;top:673.74px;font-size:10.6px;line-height:13.78px;color:#2b2a28;font-weight:400;">May</div>
<div class="b" style="left:1299px;top:566px;width:45px;height:104px;background:#62b8b4;"></div>
<div class="b" style="left:1344px;top:585px;width:45px;height:85px;background:#375b5f;"></div>
<div class="b" style="left:1389px;top:593px;width:46px;height:77px;background:#d4d4d4;"></div>
<div class="b" style="left:1435px;top:558px;width:45px;height:112px;background:#008b8a;"></div>
<div class="t" style="left:1348.46px;width:80px;text-align:center;top:673.74px;font-size:10.6px;line-height:13.78px;color:#2b2a28;font-weight:400;">Jun</div>
<div class="b" style="left:62px;top:512px;width:1px;height:159px;background:#9e9e9e;"></div>
<div class="b" style="left:62px;top:670px;width:1447px;height:1px;background:#9e9e9e;"></div>
<div class="t" style="left:5.40px;width:50px;text-align:right;top:662.83px;font-size:10px;line-height:13.0px;color:#2b2a28;font-weight:400;">0</div>
<div class="t" style="left:5.40px;width:50px;text-align:right;top:636.50px;font-size:10px;line-height:13.0px;color:#2b2a28;font-weight:400;">0.3K</div>
<div class="t" style="left:5.40px;width:50px;text-align:right;top:610.17px;font-size:10px;line-height:13.0px;color:#2b2a28;font-weight:400;">0.6K</div>
<div class="t" style="left:5.40px;width:50px;text-align:right;top:583.84px;font-size:10px;line-height:13.0px;color:#2b2a28;font-weight:400;">0.9K</div>
<div class="t" style="left:5.40px;width:50px;text-align:right;top:557.51px;font-size:10px;line-height:13.0px;color:#2b2a28;font-weight:400;">1.2K</div>
<div class="t" style="left:5.40px;width:50px;text-align:right;top:531.18px;font-size:10px;line-height:13.0px;color:#2b2a28;font-weight:400;">1.5K</div>
<div class="t" style="left:5.40px;width:50px;text-align:right;top:504.85px;font-size:10px;line-height:13.0px;color:#2b2a28;font-weight:400;">1.8K</div>
<div class="b" style="left:62px;top:682px;width:1px;height:16px;background:#cfcfd6;"></div>
<div class="b" style="left:62px;top:697.5px;width:1447px;height:1px;background:#cfcfd6;"></div>
<div class="b" style="left:1508px;top:682px;width:1px;height:16px;background:#cfcfd6;"></div>
<div class="b" style="left:768.7px;top:695px;width:35.5px;height:6px;background:#faf9f7;"></div>
<div class="t" style="left:746.20px;width:80px;text-align:center;top:690.74px;font-size:10.6px;line-height:13.78px;color:#2b2a28;font-weight:400;">FY24</div>
<div class="b" style="left:1526px;top:563px;width:9px;height:9px;background:#62b8b4;"></div>
<div class="t" style="left:1540.70px;top:560.14px;font-size:11.1px;line-height:14.43px;color:#3a3937;font-weight:400;">MultiVariate Prediction</div>
<div class="b" style="left:1526px;top:579px;width:9px;height:9px;background:#375b5f;"></div>
<div class="t" style="left:1540.70px;top:576.04px;font-size:11.1px;line-height:14.43px;color:#3a3937;font-weight:400;">UniVariate Prediction</div>
<div class="b" style="left:1526px;top:595px;width:9px;height:9px;background:#d4d4d4;"></div>
<div class="t" style="left:1540.70px;top:591.94px;font-size:11.1px;line-height:14.43px;color:#3a3937;font-weight:400;">Forecast</div>
<div class="b" style="left:1526px;top:612px;width:9px;height:9px;background:#008b8a;"></div>
<div class="t" style="left:1540.70px;top:607.84px;font-size:11.1px;line-height:14.43px;color:#3a3937;font-weight:400;">Actual</div>
<div class="b" style="left:11px;top:487px;width:1669px;height:222px;border:3px solid #c63e2c;box-sizing:border-box"></div>
<svg class="b" style="left:16px;top:726.0px;" width="17" height="17" viewBox="0 0 17 17"><g fill="none" stroke="#4f4d4b" stroke-width="1.05"><path d="M1.5 1.5 H13.2 V4.3 M1.5 1.5 V11.8 H6.5 M5.5 1.5 V9.3 M9.4 1.5 V6.8 M1.5 4.3 H13.2 M1.5 6.8 H9.4 M1.5 9.3 H5.5"/><path d="M6.2 14.1 L6.7 11.8 L12.9 6.3 L14.6 8.2 L8.4 13.7 Z" stroke-linejoin="round"/></g></svg>
<div class="t" style="left:42.60px;top:726.19px;font-size:12.85px;line-height:16.71px;color:#5d5b59;font-weight:400;">Volume Analysis</div>
<svg class="b" style="left:184px;top:726.0px;" width="17" height="17" viewBox="0 0 17 17"><g fill="none" stroke="#4f4d4b" stroke-width="1.05"><path d="M1.5 1.5 H13.2 V4.3 M1.5 1.5 V11.8 H6.5 M5.5 1.5 V9.3 M9.4 1.5 V6.8 M1.5 4.3 H13.2 M1.5 6.8 H9.4 M1.5 9.3 H5.5"/><path d="M6.2 14.1 L6.7 11.8 L12.9 6.3 L14.6 8.2 L8.4 13.7 Z" stroke-linejoin="round"/></g></svg>
<div class="t" style="left:211.00px;top:726.19px;font-size:12.85px;line-height:16.71px;color:#5d5b59;font-weight:400;">Prediction</div>
<svg class="b" style="left:316.7px;top:726.0px;" width="17" height="17" viewBox="0 0 17 17"><g fill="none" stroke="#4f4d4b" stroke-width="1.05"><path d="M1.5 1.5 H13.2 V4.3 M1.5 1.5 V11.8 H6.5 M5.5 1.5 V9.3 M9.4 1.5 V6.8 M1.5 4.3 H13.2 M1.5 6.8 H9.4 M1.5 9.3 H5.5"/><path d="M6.2 14.1 L6.7 11.8 L12.9 6.3 L14.6 8.2 L8.4 13.7 Z" stroke-linejoin="round"/></g></svg>
<div class="t" style="left:344.70px;top:726.05px;font-size:13.0px;line-height:16.9px;color:#2e2c2a;font-weight:400;-webkit-text-stroke:0.32px #2e2c2a;">Volume Prediction.</div>
<svg class="b" style="left:527px;top:726.5px;" width="16" height="16" viewBox="0 0 16 16"><g fill="none" stroke="#5d5b59" stroke-width="1"><rect x="0.5" y="0.8" width="12.6" height="12.4"/><path d="M0.5 3.4 H13.1 M2.5 5.8 H3.6 M4.8 5.8 H11.2 M2.5 8.1 H3.6 M4.8 8.1 H11.2 M2.5 10.4 H3.6 M4.8 10.4 H11.2"/></g></svg>
<div class="t" style="left:552.70px;top:726.19px;font-size:12.85px;line-height:16.71px;color:#5d5b59;font-weight:400;">Input Drivers</div>
<svg class="b" style="left:675px;top:726px;" width="18" height="18" viewBox="0 0 18 18"><g fill="none" stroke="#161513" stroke-width="1.1"><path d="M6 10.3 H0.6 V0.6 H13 V6"/><path d="M2.6 5.6 H4.3 L5.5 3.4 L7.2 7.6 L8.4 5.6 H10.4"/><path d="M4 13.5 H7 M5.6 10.3 V13.5"/><path d="M10.2 9.4 L13.4 11.2 L10.2 13 Z" fill="#161513"/></g></svg>
<div class="t" style="left:701.20px;top:726.20px;font-size:12.35px;line-height:16.05px;color:#161513;font-weight:400;">Forecast Accuracy</div>
<svg class="b" style="left:852.7px;top:726.0px;" width="17" height="17" viewBox="0 0 17 17"><g fill="none" stroke="#4f4d4b" stroke-width="1.05"><path d="M1.5 1.5 H13.2 V4.3 M1.5 1.5 V11.8 H6.5 M5.5 1.5 V9.3 M9.4 1.5 V6.8 M1.5 4.3 H13.2 M1.5 6.8 H9.4 M1.5 9.3 H5.5"/><path d="M6.2 14.1 L6.7 11.8 L12.9 6.3 L14.6 8.2 L8.4 13.7 Z" stroke-linejoin="round"/></g></svg>
<div class="t" style="left:879.60px;top:726.19px;font-size:12.85px;line-height:16.71px;color:#5d5b59;font-weight:400;">Predict by Algorithms</div>
<svg class="b" style="left:463px;top:728px;" width="12" height="12" viewBox="0 0 12 12"><path d="M1.8 1.2 L8.8 8.2 M8.8 1.2 L1.8 8.2" stroke="#161513" stroke-width="1.15"/></svg>
<div class="b" style="left:657.5px;top:715px;width:159px;height:3px;background:#1f3439;border-radius:0 0 2px 2px"></div>
<div class="b" style="left:0;top:0;width:1689px;height:747px;border:1px solid #27313b;border-top-width:1.3px;box-sizing:border-box"></div>
</body></html>
